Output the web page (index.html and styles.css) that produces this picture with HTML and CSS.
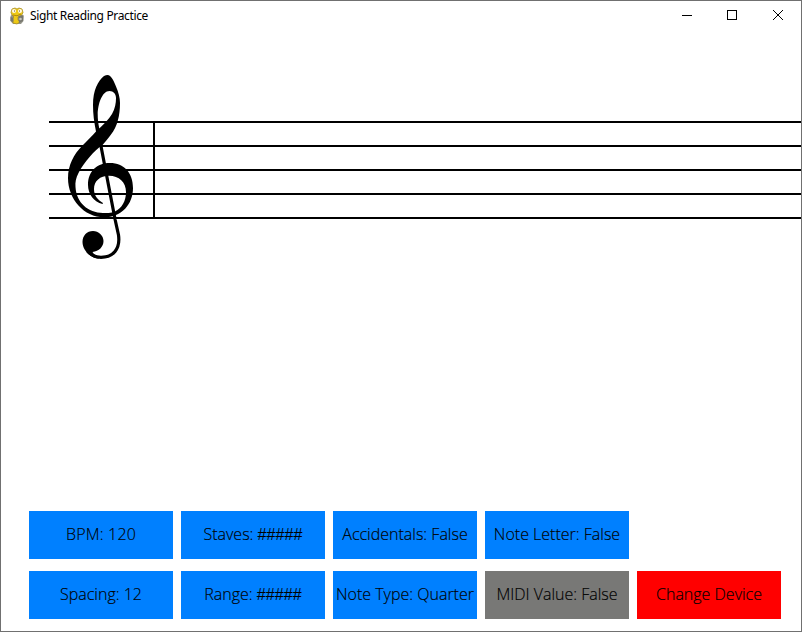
FILE: index.html
```
<!DOCTYPE html>
<html lang="en">
<head>
<meta charset="utf-8">
<title>Sight Reading Practice</title>
<link rel="stylesheet" href="styles.css">
</head>
<body>
<div class="window">
  <header class="titlebar">
    <svg class="app-icon" width="16" height="18" viewBox="0 0 16 18">
      <path d="M3 7.500L1.500 9v5L4 17h8l2.500-3V9L12 8z" fill="#96968a"/>
      <path d="M2 5.500L3 2l3-1 2 1 2-1 3 1 1 3.500-1.500 3L9 10v3l2 2-3 2-4-1-1-4 2-2-2-2z" fill="#edc915" stroke="#a88e24" stroke-width=".8"/>
      <path d="M1.500 10l3 1v4l-3-1zm8-1l5-1-.5 6-4 2z" fill="#77776f"/>
      <circle cx="5" cy="4" r="2" fill="#fff9e8"/><circle cx="11" cy="4" r="2" fill="#fff9e8"/>
      <path d="M5 4h1m4 0h1" stroke="#66551d"/>
      <path d="M4 8q4 2 8-1" fill="none" stroke="#ad8710"/>
      <circle cx="11.500" cy="12" r="1.300" fill="#c8c8bd"/>
    </svg>
    <span class="title">Sight Reading Practice</span>
    <svg class="controls" width="137" height="28" viewBox="0 0 137 28" fill="none" stroke="#000">
      <path d="M18 13.500h10M63.500 8.500h9v9h-9z" shape-rendering="crispEdges"/>
      <path d="M109 8l10 10m0-10l-10 10"/>
    </svg>
  </header>
  <main class="score">
    <svg width="800" height="200" viewBox="1 70 800 200">
      <path d="M49 122H801M49 146H801M49 170H801M49 194H801M49 218H801M154 121V218" fill="none" stroke="#000" stroke-width="2"/>
      <path fill-rule="evenodd" d="M107.500 75C111 75 114 81 116 86.500C118.500 92 120 98 120 103C120 116 117 127 111 134.500C108 139 105 142 102.500 145C97 149 94 152 90 156.500C85 162 81 168 78.500 173C76 178 75 182 75.500 187C76.500 203 88 212.500 103 213C106 213.200 109 213 112 212.400L115 211.600C122 208 126 201 126 192C126 182 119 175.700 109 175.700C100 175.700 94 181 94 189C94 196 98 200 103 203L102.500 204C94 202 88 194 88 185C88 171 97 163 110 163C124 163 133 173 133 188C133 204 122 217.300 104 217.300C84 217.300 68 199 68 178C68 165 74 154 82 146C87 141 92 136 96 131.500C94 122 93 114 93 105C93 90 98 81 104 76Q106 75 107.500 75ZM109.500 91C102 91 98 104 97.700 114C97.700 119 98.300 124 99.300 128.500C104 124 109 119 112 114C115 109 116 103 116 98C116 94 113.500 91 109.500 91Z"/>
      <path d="M97.500 128L105 167L115.200 220L118.500 235C120.500 249 113 257.300 101 257.300C95 257.300 91 255 87.500 251" fill="none" stroke="#000" stroke-width="3.200"/>
      <path d="M93 231C98.500 231 103.500 235.500 103.500 241C103.500 247 99 251 92.500 252Q93 254 97 256L99 258.800C90 258 82.500 250 82.500 242C82.500 235.500 87 231 93 231Z"/>
    </svg>
  </main>
  <nav class="buttons">
    <button><span class="wide">BPM: 120</span></button>
    <button><span>Staves: <span class="hashes">#####</span></span></button>
    <button><span>Accidentals: False</span></button>
    <button><span>Note Letter: False</span></button>
    <button class="spacing-button"><span>Spacing: 12</span></button>
    <button><span>Range: <span class="hashes">#####</span></span></button>
    <button><span>Note Type: Quarter</span></button>
    <button class="disabled"><span>MIDI Value: False</span></button>
    <button class="danger"><span>Change Device</span></button>
  </nav>
</div>
</body>
</html>
```
FILE: styles.css
```
* { box-sizing: border-box; }
body { margin: 0; }
.window { width: 802px; height: 632px; border: 1px solid #707070; background: #fff; display: flex; flex-direction: column; overflow: hidden; }
.titlebar { display: flex; height: 30px; align-items: center; padding-left: 8px; }
.app-icon { flex: none; margin-right: 5px; }
.title { font: 12px/28px "Noto Sans", sans-serif; letter-spacing: -0.35px; color: #000; white-space: nowrap; }
.controls { margin-left: auto; }
.score { flex: 1; padding-top: 39px; }
.score svg { display: block; }
.buttons { display: grid; grid-template-columns: repeat(5, 144px); grid-auto-rows: 48px; gap: 12px 8px; padding: 0 0 12px 28px; }
button { display: flex; align-items: center; justify-content: center; border: 0; padding: 0 0 2px; background: #0080ff; color: #000; font: 300 16px/20px "Open Sans", sans-serif; white-space: nowrap; -webkit-text-stroke: 0.15px #000; }
.wide { letter-spacing: 0.2px; }
.hashes { font-family: "Liberation Sans", sans-serif; line-height: 0; letter-spacing: 0.1px; -webkit-text-stroke-width: 0; }
.spacing-button { grid-column: 1; }
.disabled { background: #787876; }
.danger { background: #f00; }
```
